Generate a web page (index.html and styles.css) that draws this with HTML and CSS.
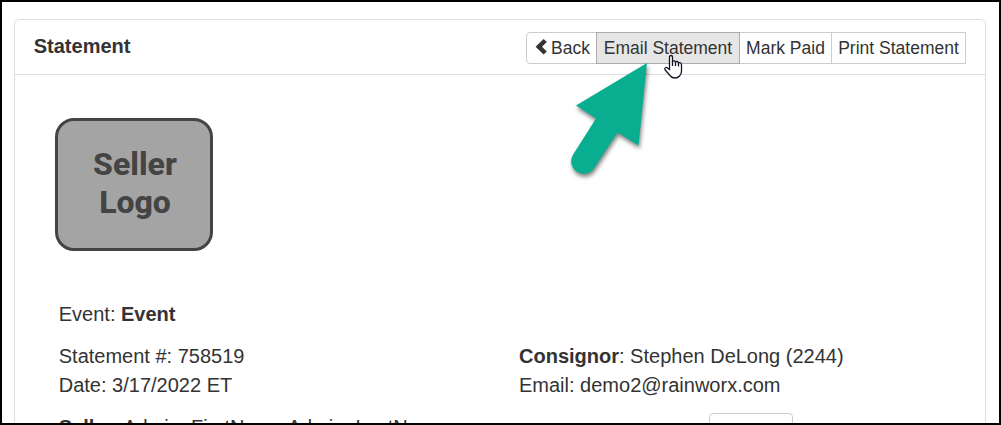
FILE: index.html
```html
<!DOCTYPE html>
<html lang="en">
<head>
<meta charset="utf-8">
<title>Statement</title>
<link rel="stylesheet" href="styles.css">
</head>
<body>
<div class="frame">
  <section class="panel">
    <header class="panel-heading">
      <h1 class="panel-title">Statement</h1>
      <div class="btn-group">
        <button class="btn btn-back"><svg class="chevron" viewBox="0 0 12 16" aria-hidden="true"><path d="M8.6 0 L11.8 3 L7 7.8 L11.8 12.6 L8.6 15.6 L0.6 7.8 Z"/></svg>Back</button>
        <button class="btn btn-active">Email Statement</button>
        <button class="btn btn-paid">Mark Paid</button>
        <button class="btn btn-print">Print Statement</button>
      </div>
    </header>
    <div class="panel-body">
      <div class="seller-logo">Seller<br>Logo</div>
      <div class="details">
        <div class="row"><div>Event: <strong>Event</strong></div></div>
        <div class="row">
          <div>Statement #: 758519<br>Date: 3/17/2022 ET</div>
          <div><strong>Consignor</strong>: Stephen DeLong (2244)<br>Email: demo2@rainworx.com</div>
        </div>
        <div class="row">
          <div><strong>Seller</strong>: Admin_FirstName Admin_LastName</div>
          <div><span class="cut-button"></span></div>
        </div>
      </div>
    </div>
  </section>
</div>
<svg class="arrow" width="110" height="140" viewBox="0 0 110 140" aria-hidden="true">
  <path d="M87 3 L16 45.5 L36 58.5 L13.2 94.5 A12.2 12.2 0 0 0 34.2 108 L57.5 72.5 L78.5 85.5 Z"/>
</svg>
<svg class="cursor" width="20" height="26" viewBox="0 0 20 26" aria-hidden="true">
  <path d="M5.5 15.5 V3 Q5.5 1.5 7 1.5 Q8.5 1.5 8.5 3 V7.5 Q8.7 6.7 10 6.8 Q11.4 7 11.5 8 Q12 7.3 13 7.5 Q14.5 7.8 14.5 9 Q15 8.4 16 8.6 Q17.5 9 17.5 10.5 V17 Q17.5 20 15.5 22 Q14 24 11 24 Q8 24 6.5 22 L1.2 16 Q0.2 14.5 1.5 13.7 Q2.7 13 3.8 14.2 Z"/>
  <path class="fingers" d="M8.5 7 V12 M11.5 8 V12 M14.5 9 V12.5"/>
</svg>
</body>
</html>
```
FILE: styles.css
```css
* { box-sizing: border-box; }
body {
  margin: 0;
  height: 425px;
  overflow: hidden;
  position: relative;
  background: #fff;
  color: #333;
  font: 20px/29px "Liberation Sans", Arial, sans-serif;
}
.frame {
  width: 1001px;
  height: 425px;
  overflow: hidden;
  border: 2px solid #000;
  padding: 17px 13px 0 12px;
}
.panel {
  height: 500px;
  border: 1px solid #ddd;
  border-radius: 5px;
}
.panel-heading {
  display: flex;
  justify-content: space-between;
  align-items: flex-start;
  height: 55px;
  padding: 12px 19px 0 18.75px;
  border-bottom: 1px solid #ddd;
}
.panel-title {
  margin: 0;
  font-size: 20px;
  line-height: 29px;
}
.btn-group { display: flex; }
.btn {
  height: 32px;
  margin: 0 0 0 -1px;
  padding: 0;
  border: 1px solid #ccc;
  background: #fff;
  color: #333;
  font: 17.5px/26px "Liberation Sans", Arial, sans-serif;
  white-space: nowrap;
}
.btn-back {
  display: flex;
  align-items: center;
  width: 71px;
  padding-left: 8px;
  border-radius: 4px 0 0 4px;
}
.btn-active {
  position: relative;
  width: 144px;
  border-color: #adadad;
  background: #e6e6e6;
}
.btn-paid { width: 93px; }
.btn-print { width: 135px; }
.chevron {
  width: 12px;
  height: 16px;
  margin: 0 4px 2px 0;
  fill: #333;
}
.panel-body { padding: 43px 40px 0; }
.seller-logo {
  width: 158px;
  height: 133px;
  padding: 24px 0 0 2px;
  border: 3px solid #444;
  border-radius: 19px;
  background: #a4a4a4;
  color: #444;
  font: 800 32px/38px Roboto, sans-serif;
  text-align: center;
}
.details { padding: 49px 0 0 3.75px; }
.row {
  display: grid;
  grid-template-columns: 460.25px 1fr;
  margin-bottom: 13px;
}
.cut-button {
  display: block;
  width: 84px;
  height: 32px;
  margin-left: 190px;
  border: 1px solid #ccc;
  border-radius: 4px;
}
.arrow {
  position: absolute;
  left: 560px;
  top: 60px;
  fill: #09ae91;
  filter: drop-shadow(1px 3px 2px rgba(0, 0, 0, .5));
}
.cursor {
  position: absolute;
  left: 664px;
  top: 54px;
  fill: #fff;
  stroke: #15152a;
  stroke-width: 1.3;
}
.fingers { fill: none; }
```
